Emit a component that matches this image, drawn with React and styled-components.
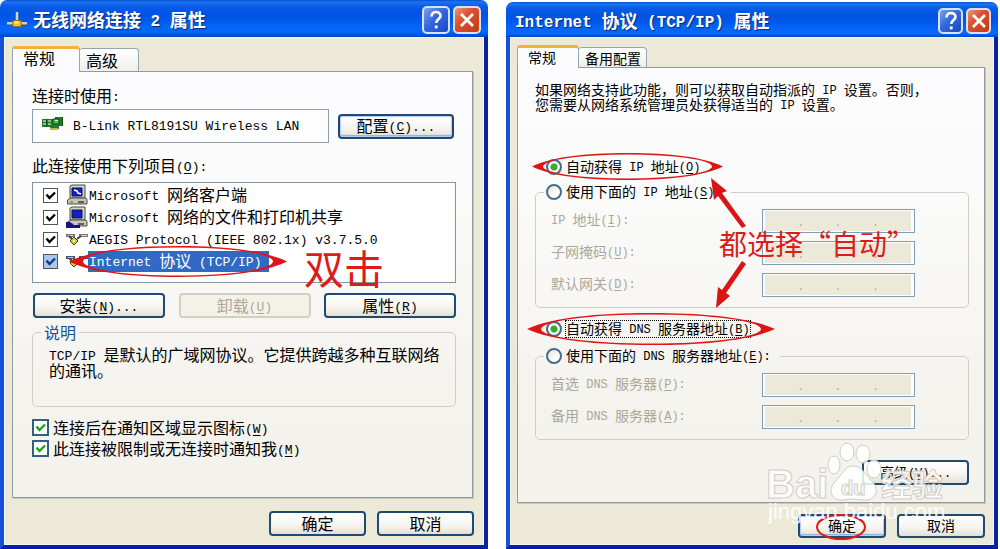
import React from "react";
import styled, { createGlobalStyle, css } from "styled-components";

const CJK = `"Noto Sans CJK SC", sans-serif`;
const MONO = `"Liberation Mono", "Noto Sans CJK SC", monospace`;

const GlobalStyle = createGlobalStyle`
  *, *::before, *::after { box-sizing: border-box; }
  body { margin: 0; background: #fff; color: #000; font-family: ${CJK}; }
`;

/* ---------- text ---------- */

const Latin = styled.span`
  font-family: ${MONO};
  font-size: ${(p) => p.$size}px;
  line-height: 0;
  vertical-align: 1px;
  white-space: pre-wrap;
`;

const Key = styled.span`
  text-decoration: underline;
  text-underline-offset: 2px;
`;

const LATIN_SIZE = { large: 13, small: 12, title: 16 };

function mnemonic(run) {
  const at = run.indexOf("&");
  if (at < 0) return run;
  return (
    <>
      {run.slice(0, at)}
      <Key>{run[at + 1]}</Key>
      {run.slice(at + 2)}
    </>
  );
}

/* Half-width runs use the fixed-pitch face; "&" marks the access key. */
function Txt({ size = "large", children }) {
  return children.split(/([\x20-\x7e]+)/).map((run, i) =>
    i % 2 ? (
      <Latin key={i} $size={LATIN_SIZE[size]}>
        {mnemonic(run)}
      </Latin>
    ) : (
      run
    )
  );
}

/* ---------- window ---------- */

const Desktop = styled.main`
  display: flex;
  align-items: stretch;
  gap: 18px;
  padding-right: 2px;
`;

const Window = styled.section`
  flex: ${(p) => p.$grow} 1 0;
  min-width: 0;
  position: relative;
  display: flex;
  flex-direction: column;
  margin-top: ${(p) => (p.$small ? 2 : 0)}px;
  font-size: ${(p) => (p.$small ? 14 : 16)}px;
`;

const TitleBar = styled.header`
  display: flex;
  align-items: center;
  gap: 6px;
  height: ${(p) => (p.$small ? 35 : 37)}px;
  padding: 3px 7px 0 ${(p) => (p.$small ? 9 : 7)}px;
  border-radius: 7px 7px 0 0;
  background: linear-gradient(#0a50c8 0, #1a74f4 2px, #0a5ce6 6px, #0054e3 14px, #0058ea 20px, #0568fb 28px, #0566f8 32px, #0044c8 100%);
`;

const Title = styled.h1`
  flex: 1;
  margin: 0;
  padding-bottom: 2px;
  font-size: 18px;
  line-height: 24px;
  font-weight: 700;
  color: #fff;
  text-shadow: 1px 1px 1px #0a2a80;
  white-space: nowrap;
`;

const TitleButtons = styled.div`
  display: flex;
  gap: 3px;
`;

const TitleButton = styled.button`
  display: grid;
  place-items: center;
  width: ${(p) => (p.$small ? 25 : 28)}px;
  height: ${(p) => (p.$small ? 26 : 28)}px;
  padding: 0;
  border: 2px solid #d5e2fa;
  border-radius: 5px;
  background: ${(p) =>
    p.$close
      ? "linear-gradient(135deg, #ee9478, #dc5030 40%, #c23a14)"
      : "linear-gradient(135deg, #7ba0f0, #3468dc 45%, #1a48c4)"};
`;

const Body = styled.div`
  flex: 1;
  display: flex;
  flex-direction: column;
  border: solid #0a1fa8;
  border-width: 0 4px 4px;
  border-left-color: #1450d8;
  background: #ece9d8;
  box-shadow: inset 1px 1px 0 #f6f6fa, inset -1px -1px 0 #f6f6fa;
  padding: ${(p) => (p.$small ? "8px 9px 7px 7px" : "9px 11px 9px 8px")};
`;

const TabStrip = styled.div`
  display: flex;
  align-items: flex-end;
  height: ${(p) => (p.$small ? 22 : 25)}px;
`;

const Tab = styled.button`
  position: relative;
  padding: 0 6px;
  border: 1px solid #91a7b4;
  border-bottom: 0;
  border-radius: 3px 4px 0 0;
  background: linear-gradient(#fff, #f0f0ea);
  color: #000;
  font-family: ${CJK};
  font-size: ${(p) => (p.$small ? 14 : 16)}px;
  line-height: 18px;
  text-align: left;
  height: ${(p) => (p.$small ? 20 : 23)}px;
  ${(p) =>
    p.$active &&
    css`
      z-index: 1;
      flex: none;
      width: ${p.$small ? 62 : 68}px;
      height: ${p.$small ? 23 : 26}px;
      margin-bottom: -1px;
      padding: 0 10px 5px;
      border-top: 3px solid #f0b23c;
      background: #fcfcfe;
    `}
  ${(p) => !p.$active && `border-left: 0; padding-right: ${p.$small ? 5 : 20}px;`}
`;

const Panel = styled.div`
  position: relative;
  display: flex;
  flex-direction: column;
  border: 1px solid #919b9c;
  box-shadow: 1px 1px 0 #c8c6b8;
  background: linear-gradient(#fcfcfe, #fbfbfb 25%, #f4f3ee 75%, #f3f2ed);
  padding: ${(p) => (p.$small ? "14px 15px 17px 17px" : "13px 16px 38px 19px")};
`;

const Footer = styled.footer`
  position: relative;
  display: flex;
  justify-content: flex-end;
  gap: 11px;
  margin: ${(p) => (p.$small ? "11px 0 0" : "13px -1px 0 0")};
`;

/* ---------- controls ---------- */

const Button = styled.button`
  position: relative;
  width: ${(p) => p.$width}px;
  height: ${(p) => (p.$small ? 24 : 25)}px;
  padding: 0 0 2px;
  border: 2px solid #1f4a72;
  border-radius: 4px;
  background: linear-gradient(#fff, #f5f4ef 60%, #e4e0d6);
  color: #000;
  font-family: ${CJK};
  font-size: inherit;
  line-height: 18px;
  white-space: nowrap;
  ${(p) => p.$primary && "box-shadow: inset 0 0 0 1px #b4cdf2, inset 0 -2px 1px #8aaee6;"}
  &:disabled {
    border: 2px solid #d3d0c2;
    background: #f4f2e8;
    color: #aca899;
  }
`;

const Label = styled.p`
  margin: 0;
  line-height: 20px;
`;

const AdapterRow = styled.div`
  display: flex;
  align-items: center;
  gap: 9px;
  margin: 4px 2px 12px 0;
`;

const AdapterBox = styled.div`
  flex: 1;
  display: flex;
  align-items: center;
  gap: 9px;
  height: 34px;
  padding: 0 8px 5px;
  border: 1px solid #8a9fac;
  background: #fdfdfd;
  line-height: 20px;
  white-space: nowrap;
`;

const ItemList = styled.ul`
  position: relative;
  list-style: none;
  margin: 7px 0 10px;
  padding: 1px 0 10px;
  border: 1px solid #7f95a5;
  background: #fff;
`;

const Item = styled.li`
  position: relative;
`;

const ItemLabel = styled.label`
  display: flex;
  align-items: center;
  height: 22px;
  padding-left: 10px;
  line-height: 19px;
  white-space: nowrap;
`;

const ItemIcon = styled.svg`
  flex: none;
  width: 22px;
  height: 22px;
  margin-left: 8px;
`;

const ItemName = styled.span`
  padding: 0 8px 2px 1px;
  ${(p) => p.$selected && "background: #316ac5; color: #fff;"}
`;

const CheckBox = styled.input`
  appearance: none;
  flex: none;
  width: ${(p) => (p.$big ? 17 : 15)}px;
  height: ${(p) => (p.$big ? 17 : 15)}px;
  margin: 0;
  border: ${(p) => (p.$big ? "2px solid #34607c" : "1px solid #555")};
  background-color: ${(p) => (p.$tint ? "#a9c6f0" : "#fff")};
  background-image: url("data:image/svg+xml,%3Csvg xmlns='http://www.w3.org/2000/svg' viewBox='0 0 13 13'%3E%3Cpath d='M2.5 5.5 5.5 9 11 3.5' fill='none' stroke='${(p) =>
    p.$big ? "%2321a121" : p.$tint ? "%23123c80" : "%23000"}' stroke-width='2.4'/%3E%3C/svg%3E");
`;

const ButtonRow = styled.div`
  display: flex;
  justify-content: space-between;
  padding-left: 1px;
`;

const Group = styled.fieldset`
  min-width: 0;
  margin: ${(p) => p.$top}px 0 0;
  padding: 0;
  border: 1px solid #cfcec4;
  border-radius: 5px;
`;

const Legend = styled.legend`
  margin-left: 8px;
  padding: 0 3px;
  line-height: 18px;
  color: #16519c;
`;

const Description = styled.p`
  margin: 0;
  padding: 5px 0 28px 16px;
  line-height: 16px;
`;

const Checks = styled.div`
  margin-top: 10px;
`;

const CheckLine = styled.label`
  display: flex;
  align-items: center;
  gap: 4px;
  height: 21px;
  line-height: 18px;
  white-space: nowrap;
`;

const CheckText = styled.span`
  padding-bottom: 2px;
`;

const Intro = styled.p`
  margin: 0 0 45px;
  line-height: 15px;
`;

const RadioLine = styled.div`
  position: relative;
  display: flex;
  height: 20px;
  margin-top: ${(p) => p.$top || 0}px;
  padding-left: 11px;
`;

const RadioLegend = styled.legend`
  margin-left: 8px;
  padding: 0 8px 0 2px;
`;

const RadioLabel = styled.label`
  display: flex;
  align-items: center;
  gap: 3px;
  height: 20px;
  line-height: 16px;
  white-space: nowrap;
`;

const RadioText = styled.span`
  padding: 0 1px 2px;
  ${(p) => p.$focus && "outline: 1px dotted #000; outline-offset: -1px;"}
`;

const Radio = styled.input`
  appearance: none;
  flex: none;
  width: 16px;
  height: 16px;
  margin: 0;
  border: 2px solid #466c8c;
  border-radius: 50%;
  background: linear-gradient(135deg, #e4e4de, #fff 70%);
  &:checked {
    background: radial-gradient(circle, #2fae2f 0 3px, #f6f6f2 4px);
  }
`;

const Fields = styled.div`
  display: flex;
  flex-direction: column;
  gap: 8px;
  padding: 7px 53px 10px 15px;
`;

const FieldRow = styled.div`
  display: flex;
  align-items: center;
  justify-content: space-between;
  color: #aca899;
  line-height: 18px;
  white-space: nowrap;
`;

const FieldName = styled.span`
  padding-bottom: 4px;
`;

const IpBox = styled.div`
  display: flex;
  width: 153px;
  height: 24px;
  padding: 1px 3px 1px 2px;
  border: 1px solid #7f9db9;
  background: #fff;
`;

const Octets = styled.div`
  display: flex;
  flex: 1;
  align-items: center;
  background: #ece9d8;
  font-size: 12px;
  line-height: 20px;
`;

const Octet = styled.input`
  flex: 1;
  width: 0;
  min-width: 0;
  height: 18px;
  padding: 0;
  border: 0;
  background: transparent;
  text-align: center;
`;

const AdvancedRow = styled.div`
  display: flex;
  justify-content: flex-end;
  margin-top: 20px;
`;

/* ---------- annotations ---------- */

const Overlay = styled.svg`
  position: absolute;
  left: ${(p) => p.$x}px;
  top: ${(p) => p.$y}px;
  overflow: visible;
  pointer-events: none;
  z-index: 2;
`;

const Note = styled.span`
  position: absolute;
  left: ${(p) => p.$x}px;
  top: ${(p) => p.$y}px;
  z-index: 2;
  color: #dc1c18;
  font-size: ${(p) => p.$size}px;
  line-height: 40px;
  font-weight: 400;
  white-space: nowrap;
`;

const Watermark = styled.svg`
  position: absolute;
  right: 52px;
  bottom: 22px;
  pointer-events: none;
  z-index: 3;
`;

/* Hand-drawn ring: hairline above and below, heavy pointed ends. */
function Ring({ x, y, w, h, end = 14 }) {
  const m = w / 2;
  const ry = h / 2;
  const ix = m - end;
  const iy = ry - 1.5;
  const a = w * 0.1;
  const b = w * 0.28;
  const t = ry * 0.3;
  return (
    <Overlay $x={x} $y={y} width={w} height={h} aria-hidden="true">
      <path
        fillRule="evenodd"
        fill="#e01414"
        d={`M0 ${ry}C${a} ${t} ${b} 0 ${m} 0S${w - a} ${t} ${w} ${ry}C${w - a} ${h - t} ${w - b} ${h} ${m} ${h}S${a} ${h - t} 0 ${ry}ZM${end} ${ry}A${ix} ${iy} 0 0 1 ${w - end} ${ry}A${ix} ${iy} 0 0 1 ${end} ${ry}Z`}
      />
    </Overlay>
  );
}

/* ---------- icons ---------- */

function ConnectionIcon() {
  return (
    <svg width="20" height="18" viewBox="0 0 20 18" aria-hidden="true">
      <path d="M10 1v9" stroke="#d8d4c0" strokeWidth="2.5" />
      <path d="M0 12.5h20" stroke="#c9cdd0" strokeWidth="3" />
      <path d="M0 14h20" stroke="#3a4a66" />
      <path d="M6 9.5h8v6H6z" fill="#f2c230" stroke="#9a7410" />
      <path d="M7.5 10.5h4v2h-4z" fill="#fff0a0" />
    </svg>
  );
}

function CardIcon() {
  return (
    <svg width="23" height="16" viewBox="0 0 23 16" aria-hidden="true">
      <path d="M1 3h13V1h7v9h-3v3H9v-2H1z" fill="#1f7a2c" />
      <path d="M2 5h3M2 8h3M7 5h3M7 8h3" stroke="#a8dca0" strokeWidth="1.4" />
      <path d="M12 3h6v5h-6z" fill="#57b356" stroke="#0d4d18" />
      <path d="M14 4.5h3" stroke="#d9f2c8" />
      <path d="M9 12h8v2H9z" fill="#c9b04a" />
      <path d="M5.5 3v8M21.500 1v9" stroke="#0d4d18" />
    </svg>
  );
}

function ComputerIcon({ service }) {
  return (
    <ItemIcon viewBox="0 0 22 22" aria-hidden="true">
      <path d="M4 2 6 1h13v12l-2 1H4z" fill="#d6d3c4" stroke="#4a4a44" />
      <path d="M6 4h10v8H6z" fill="#1420c4" stroke="#0a1060" />
      {!service && <path d="m8 6 3 1 1 2 3 1" stroke="#fff" strokeWidth="1.6" fill="none" />}
      <path d="M1.5 16 5 14h15l1 2v4H1.5z" fill="#c9c6b6" stroke="#4a4a44" />
      <path d="M12 18h6" stroke="#333" strokeWidth="1.4" />
      <path d="M4 18h3" stroke="#3fae3f" strokeWidth="1.4" />
      {service && <path d="M0 16h4l4 3h6v3H0z" fill="#14147c" />}
    </ItemIcon>
  );
}

function ProtocolIcon({ selected }) {
  return (
    <ItemIcon viewBox="0 0 22 22" aria-hidden="true">
      <path d="M0 7.5h9M13 7.5h9" stroke={selected ? "#46566e" : "#777"} strokeWidth="3" />
      <path d="M2 7.5h5M15 7.5h6" stroke="#d8d8d0" />
      <path d="m3 8 4 4M15 8l-4 3" stroke="#444" strokeWidth="2" />
      <path d="m8 9 4 4-4 4-4-4z" fill="#d8c838" stroke="#4c4a10" />
      <path d="M7 12h2v2H7z" fill="#fffbd0" />
    </ItemIcon>
  );
}

function TitleControls({ small }) {
  return (
    <TitleButtons>
      <TitleButton $small={small} aria-label="帮助">
        <svg width="18" height="20" viewBox="0 0 18 20" aria-hidden="true">
          <path d="M4.5 6.5C4.5 3.5 6.5 2 9 2s4.5 1.5 4.5 4C13.5 9 9.2 9 9.2 13" fill="none" stroke="#fff" strokeWidth="2.6" />
          <path d="M7.8 15.5h2.8v2.8H7.8z" fill="#fff" />
        </svg>
      </TitleButton>
      <TitleButton $small={small} $close aria-label="关闭">
        <svg width="18" height="18" viewBox="0 0 18 18" aria-hidden="true">
          <path d="m3 3 12 12M15 3 3 15" stroke="#fff" strokeWidth="2.8" />
        </svg>
      </TitleButton>
    </TitleButtons>
  );
}

/* ---------- windows ---------- */

const ITEMS = [
  { name: "Microsoft 网络客户端", icon: <ComputerIcon /> },
  { name: "Microsoft 网络的文件和打印机共享", icon: <ComputerIcon service /> },
  { name: "AEGIS Protocol (IEEE 802.1x) v3.7.5.0", icon: <ProtocolIcon /> },
  { name: "Internet 协议 (TCP/IP)", icon: <ProtocolIcon selected />, selected: true },
];

function ConnectionWindow() {
  return (
    <Window $grow={488}>
      <TitleBar>
        <ConnectionIcon />
        <Title>
          <Txt size="title">无线网络连接 2 属性</Txt>
        </Title>
        <TitleControls />
      </TitleBar>
      <Body>
        <TabStrip>
          <Tab $active>常规</Tab>
          <Tab>高级</Tab>
        </TabStrip>
        <Panel>
          <Label>
            <Txt>连接时使用:</Txt>
          </Label>
          <AdapterRow>
            <AdapterBox>
              <CardIcon />
              <span>
                <Txt>B-Link RTL8191SU Wireless LAN</Txt>
              </span>
            </AdapterBox>
            <Button $width={116} $primary>
              <Txt>配置(&C)...</Txt>
            </Button>
          </AdapterRow>
          <Label>
            <Txt>此连接使用下列项目(&O):</Txt>
          </Label>
          <ItemList>
            {ITEMS.map((item) => (
              <Item key={item.name}>
                <ItemLabel>
                  <CheckBox type="checkbox" defaultChecked $tint={item.selected} />
                  {item.icon}
                  <ItemName $selected={item.selected}>
                    <Txt>{item.name}</Txt>
                  </ItemName>
                </ItemLabel>
                {item.selected && <Ring x={36} y={-4} w={218} h={31} />}
                {item.selected && (
                  <Note $x={271} $y={-3} $size={40}>
                    双击
                  </Note>
                )}
              </Item>
            ))}
          </ItemList>
          <ButtonRow>
            <Button $width={132}>
              <Txt>安装(&N)...</Txt>
            </Button>
            <Button $width={132} disabled>
              <Txt>卸载(&U)</Txt>
            </Button>
            <Button $width={132}>
              <Txt>属性(&R)</Txt>
            </Button>
          </ButtonRow>
          <Group $top={5}>
            <Legend>说明</Legend>
            <Description>
              <Txt>TCP/IP 是默认的广域网协议。它提供跨越多种互联网络的通讯。</Txt>
            </Description>
          </Group>
          <Checks>
            <CheckLine>
              <CheckBox type="checkbox" defaultChecked $big />
              <CheckText>
                <Txt>连接后在通知区域显示图标(&W)</Txt>
              </CheckText>
            </CheckLine>
            <CheckLine>
              <CheckBox type="checkbox" defaultChecked $big />
              <CheckText>
                <Txt>此连接被限制或无连接时通知我(&M)</Txt>
              </CheckText>
            </CheckLine>
          </Checks>
        </Panel>
        <Footer>
          <Button $width={97}>确定</Button>
          <Button $width={97}>取消</Button>
        </Footer>
      </Body>
    </Window>
  );
}

function IpField({ label }) {
  const name = label.replace(/\(.*/, "");
  return (
    <FieldRow>
      <FieldName>
        <Txt size="small">{label}</Txt>
      </FieldName>
      <IpBox role="group" aria-label={name}>
        <Octets>
          <Octet disabled aria-label={`${name} 1`} />.
          <Octet disabled aria-label={`${name} 2`} />.
          <Octet disabled aria-label={`${name} 3`} />.
          <Octet disabled aria-label={`${name} 4`} />
        </Octets>
      </IpBox>
    </FieldRow>
  );
}

function RadioOption({ name, label, checked, focus }) {
  return (
    <RadioLabel>
      <Radio type="radio" name={name} defaultChecked={checked} />
      <RadioText $focus={focus}>
        <Txt size="small">{label}</Txt>
      </RadioText>
    </RadioLabel>
  );
}

function Arrows() {
  return (
    <Overlay $x={193} $y={110} width={36} height={130} aria-hidden="true">
      <g fill="#d81414">
        <path d="M0 0 16 13 11 15 35 48 31 50 7 18 3 22Z" />
        <path d="M5 130 7 109 11 112 31 83 35 86 15 115 19 118Z" />
      </g>
    </Overlay>
  );
}

function BaiduMark() {
  return (
    <Watermark width="180" height="86" viewBox="0 0 180 86" aria-hidden="true">
      <g fill="#fff" fillOpacity="0.85" stroke="#cfcdc6" strokeWidth="1">
        <ellipse cx="68" cy="24" rx="6" ry="9" />
        <ellipse cx="81" cy="11" rx="7" ry="9" />
        <ellipse cx="97" cy="13" rx="7" ry="9" />
        <ellipse cx="108" cy="28" rx="7" ry="9" />
        <path d="M87 25c9 0 12 8 17 13 6 6 8 11 5 16-4 7-11 5-22 4-10 1-17 3-21-4-3-6 1-12 7-18 5-5 6-11 14-11z" />
        <text x="0" y="57" fontFamily="Liberation Sans" fontWeight="700" fontSize="40">
          Bai
        </text>
        <text x="75" y="54" fontFamily="Liberation Sans" fontWeight="700" fontSize="20">
          du
        </text>
        <text x="115" y="55" fontFamily="Noto Sans CJK SC" fontWeight="700" fontSize="31">
          经验
        </text>
      </g>
      <text x="2" y="78" fontFamily="Liberation Sans" fontSize="22" fill="#fff" fillOpacity="0.9">
        jingyan.baidu.com
      </text>
    </Watermark>
  );
}

function ProtocolWindow() {
  return (
    <Window $grow={492} $small>
      <TitleBar $small>
        <Title>
          <Txt size="title">Internet 协议 (TCP/IP) 属性</Txt>
        </Title>
        <TitleControls small />
      </TitleBar>
      <Body $small>
        <TabStrip $small>
          <Tab $small $active>
            常规
          </Tab>
          <Tab $small>备用配置</Tab>
        </TabStrip>
        <Panel $small>
          <Intro>
            <Txt size="small">如果网络支持此功能，则可以获取自动指派的 IP 设置。否则，</Txt>
            <br />
            <Txt size="small">您需要从网络系统管理员处获得适当的 IP 设置。</Txt>
          </Intro>
          <RadioLine>
            <RadioOption name="ip" label="自动获得 IP 地址(&O)" checked />
            <Ring x={-3} y={-4} w={191} h={27} end={11} />
          </RadioLine>
          <Group $top={5}>
            <RadioLegend>
              <RadioOption name="ip" label="使用下面的 IP 地址(&S):" />
            </RadioLegend>
            <Fields>
              <IpField label="IP 地址(&I):" />
              <IpField label="子网掩码(&U):" />
              <IpField label="默认网关(&D):" />
            </Fields>
          </Group>
          <RadioLine $top={11}>
            <RadioOption name="dns" label="自动获得 DNS 服务器地址(&B)" checked focus />
            <Ring x={-8} y={-6} w={248} h={32} />
          </RadioLine>
          <Group $top={7}>
            <RadioLegend>
              <RadioOption name="dns" label="使用下面的 DNS 服务器地址(&E):" />
            </RadioLegend>
            <Fields>
              <IpField label="首选 DNS 服务器(&P):" />
              <IpField label="备用 DNS 服务器(&A):" />
            </Fields>
          </Group>
          <AdvancedRow>
            <Button $width={107}>
              <Txt size="small">高级(&V)...</Txt>
            </Button>
          </AdvancedRow>
          <Arrows />
          <Note $x={201} $y={155} $size={28}>
            都选择“自动”
          </Note>
        </Panel>
        <Footer $small>
          <Button $small $primary $width={88}>
            确定
            <Overlay $x={15} $y={-2} width={52} height={26} aria-hidden="true">
              <ellipse cx="26" cy="13" rx="24" ry="12" fill="none" stroke="#dc1c18" strokeWidth="2" />
            </Overlay>
          </Button>
          <Button $small $width={88}>
            取消
          </Button>
        </Footer>
      </Body>
      <BaiduMark />
    </Window>
  );
}

export default function App() {
  return (
    <>
      <GlobalStyle />
      <Desktop>
        <ConnectionWindow />
        <ProtocolWindow />
      </Desktop>
    </>
  );
}
